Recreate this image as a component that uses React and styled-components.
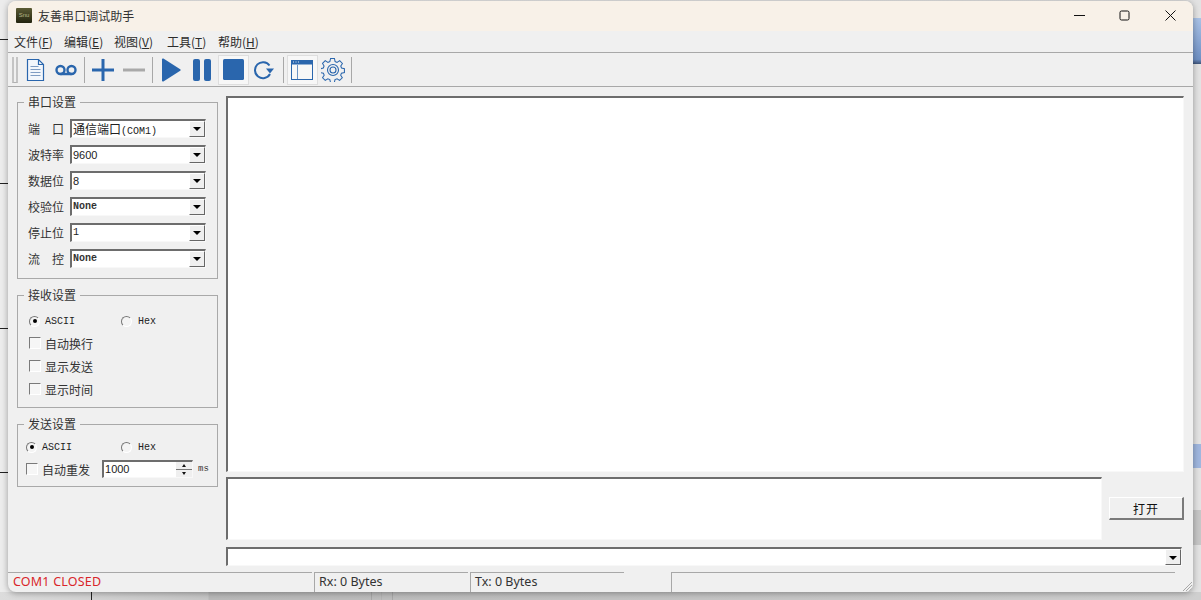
import React from "react";
import styled, { createGlobalStyle } from "styled-components";

const GlobalStyle = createGlobalStyle`
  html, body {
    margin: 0;
    padding: 0;
    background: #e6e6e6;
  }
`;

const CJK = `"Noto Sans CJK SC", "Noto Sans", sans-serif`;
const MONO = `"Liberation Mono", "Noto Sans CJK SC", monospace`;

const Desktop = styled.div`
  position: relative;
  width: 1201px;
  height: 600px;
  overflow: hidden;
  box-sizing: border-box;
  padding: 1px 0 0 8px;
  background: linear-gradient(to right, #ececec 0, #e2e2e2 100%);
  font-family: ${CJK};
  color: #222;
`;

const DesktopLine = styled.div`
  position: absolute;
  left: 0;
  top: ${(p) => p.$top}px;
  width: 8px;
  height: 1px;
  background: #222;
`;

const DesktopBottom = styled.div`
  position: absolute;
  left: 0;
  right: 0;
  bottom: 0;
  height: 8px;
  background: linear-gradient(to right, #dcdcdc 0, #c6c6c6 208px, #b9b9b9 209px, #c4c4c4 700px, #cfcfcf 100%);
`;

const DesktopTick = styled.div`
  position: absolute;
  left: ${(p) => p.$left}px;
  bottom: 0;
  width: 1px;
  height: 8px;
  background: ${(p) => p.$color};
`;

const DesktopPatch = styled.div`
  position: absolute;
  left: 1193px;
  width: 8px;
  top: ${(p) => p.$top}px;
  height: ${(p) => p.$height}px;
  background: ${(p) => p.$bg};
`;

const Window = styled.div`
  position: relative;
  z-index: 1;
  width: 1185px;
  height: 591px;
  display: flex;
  flex-direction: column;
  background: #f0f0f0;
  border-radius: 8px;
  overflow: hidden;
  box-shadow: 0 1px 6px rgba(0, 0, 0, 0.35);
`;

const TitleBar = styled.div`
  height: 30px;
  flex: none;
  box-sizing: border-box;
  display: flex;
  align-items: center;
  padding: 0 0 2px 8px;
  background: #f8f1e8;
`;

const AppIcon = styled.div`
  width: 16px;
  height: 15px;
  display: flex;
  align-items: center;
  justify-content: center;
  background: linear-gradient(#5a5a34, #23240f);
  color: #b9b98a;
  font: 6px "Liberation Sans", sans-serif;
  border-radius: 1px;
`;

const TitleText = styled.div`
  margin-left: 6px;
  font-size: 12px;
  letter-spacing: 0.05px;
  color: #333;
`;

const WindowControls = styled.div`
  margin-left: auto;
  display: flex;
  height: 100%;
`;

const WindowControl = styled.div`
  width: 45px;
  display: flex;
  align-items: center;
  justify-content: center;

  &:nth-child(2) {
    margin-right: 1px;
  }
`;

const MenuBar = styled.div`
  height: 21px;
  flex: none;
  display: flex;
  align-items: center;
  padding-left: 6px;
  font-size: 12px;
  color: #2c2c2c;
  border-bottom: 1px solid #a8a8a8;
`;

const MenuItem = styled.span`
  width: ${(p) => p.$width}px;
  white-space: nowrap;
`;

const Toolbar = styled.div`
  height: 33px;
  flex: none;
  display: flex;
  align-items: center;
  padding-left: 4px;
  border-bottom: 1px solid #a8a8a8;
`;

const Grip = styled.div`
  width: 6px;
  height: 26px;
  margin-right: 1.5px;
  box-sizing: border-box;
  border-left: 2px solid #c4c4c4;
  border-right: 2px solid #c4c4c4;
  border-bottom: 1px solid #b0b0b0;
`;

const ToolSep = styled.div`
  width: ${(p) => p.$width || 6}px;
  height: 26px;
  flex: none;
  display: flex;
  justify-content: center;

  &::before {
    content: "";
    width: 1px;
    background: #a8a8a8;
  }
`;

const ToolButton = styled.div`
  width: 31px;
  height: 30px;
  flex: none;
  box-sizing: border-box;
  display: flex;
  align-items: center;
  justify-content: center;
  background: ${(p) => (p.$pressed ? "#f7f7f7" : "transparent")};
  border: 1px solid ${(p) => (p.$pressed ? "#dedede" : "transparent")};
`;

const Body = styled.div`
  flex: 1;
  min-height: 0;
  display: flex;
  gap: 8px;
  padding: 9px 9px 0 9px;
`;

const Side = styled.div`
  width: 201px;
  flex: none;
  display: flex;
  flex-direction: column;
  gap: 16px;
  padding-top: 6px;
`;

const Group = styled.fieldset`
  margin: 0;
  height: ${(p) => p.$height}px;
  box-sizing: border-box;
  padding: 0;
  border: 1px solid #a9a9a9;
  position: relative;
`;

const GroupTitle = styled.div`
  position: absolute;
  left: 6px;
  top: -9px;
  padding: 0 4px;
  background: #f0f0f0;
  font-size: 12px;
  line-height: 15px;
  color: #333;
`;

const FieldList = styled.div`
  display: flex;
  flex-direction: column;
  gap: 6px;
  padding: 15px 11px 0 10px;
`;

const Field = styled.div`
  display: flex;
  align-items: center;
  height: 20px;
`;

const FieldLabel = styled.div`
  width: 36px;
  margin-right: 6px;
  flex: none;
  font-size: 12px;
  color: #333;
  display: flex;
  justify-content: space-between;
`;

const Combo = styled.div`
  flex: ${(p) => (p.$wide ? "none" : "1")};
  width: ${(p) => (p.$wide ? "956px" : "auto")};
  height: 19px;
  box-sizing: border-box;
  display: flex;
  align-items: center;
  background: #fff;
  border-top: 2px solid #6d6d6d;
  border-left: 2px solid #6d6d6d;
  border-right: 1px solid #f8f8f8;
  border-bottom: 1px solid #f8f8f8;
`;

const ComboText = styled.div`
  flex: 1;
  padding-left: 1px;
  font-family: ${(p) => (p.$digits ? `"Liberation Sans", sans-serif` : MONO)};
  font-size: ${(p) => (p.$digits ? "11px" : "10px")};
  font-weight: ${(p) => (p.$bold ? 700 : 400)};
  color: ${(p) => (p.$bold ? "#333" : "#222")};
  white-space: nowrap;
`;

const ComboCjk = styled.span`
  font-family: ${CJK};
  font-size: 12px;
  font-weight: 400;
`;

const ComboArrow = styled.div`
  width: 16px;
  height: 16px;
  flex: none;
  box-sizing: border-box;
  display: flex;
  align-items: center;
  justify-content: center;
  background: #efefef;
  border-right: 1px solid #666;
  border-bottom: 1px solid #666;
  border-left: 1px solid #fff;
  border-top: 1px solid #fff;

  &::after {
    content: "";
    width: 0;
    height: 0;
    margin-top: 1px;
    border-left: 4px solid transparent;
    border-right: 4px solid transparent;
    border-top: 4px solid #000;
  }
`;

const RadioRow = styled.div`
  display: flex;
  align-items: center;
  height: 14px;
  padding-left: ${(p) => p.$left}px;
  margin-top: ${(p) => p.$top || 0}px;
`;

const Radio = styled.span`
  width: 11px;
  height: 11px;
  flex: none;
  box-sizing: border-box;
  border-radius: 50%;
  background: #f4f4f4;
  border: 1px solid #fff;
  border-top-color: #777;
  border-left-color: #777;
  display: flex;
  align-items: center;
  justify-content: center;

  &::after {
    content: "";
    width: 4px;
    height: 4px;
    border-radius: 50%;
    background: ${(p) => (p.$on ? "#000" : "transparent")};
  }
`;

const OptText = styled.span`
  width: ${(p) => p.$width || 0}px;
  margin-left: ${(p) => p.$gap}px;
  font-family: ${MONO};
  font-size: 10px;
  color: #222;
`;

const CheckRow = styled.div`
  display: flex;
  align-items: center;
  height: 16px;
  padding-left: ${(p) => p.$left}px;
  margin-top: ${(p) => p.$top}px;
`;

const Check = styled.span`
  width: 12px;
  height: 12px;
  flex: none;
  box-sizing: border-box;
  background: #f6f6f6;
  border: 1px solid #fff;
  border-top-color: #7a7a7a;
  border-left-color: #7a7a7a;
`;

const CheckText = styled.span`
  margin-left: ${(p) => p.$gap}px;
  font-size: 12px;
  color: #333;
`;

const SpinBox = styled.div`
  width: 91px;
  height: 18px;
  margin-left: 12px;
  box-sizing: border-box;
  display: flex;
  background: #fff;
  border-top: 2px solid #6d6d6d;
  border-left: 2px solid #6d6d6d;
  border-right: 1px solid #f8f8f8;
  border-bottom: 1px solid #f8f8f8;
  font-family: "Liberation Sans", sans-serif;
  font-size: 11px;
  line-height: 15px;
  padding-left: 1px;
`;

const SpinValue = styled.div`
  flex: 1;
`;

const SpinArrows = styled.div`
  width: 16px;
  flex: none;
  display: flex;
  flex-direction: column;
  gap: 1px;
  background: #777;
`;

const SpinArrow = styled.div`
  flex: 1;
  background: #efefef;
  display: flex;
  align-items: center;
  justify-content: center;

  &::after {
    content: "";
    border-left: 2.5px solid transparent;
    border-right: 2.5px solid transparent;
    border-${(p) => (p.$up ? "bottom" : "top")}: 3px solid #111;
  }
`;

const Unit = styled.span`
  margin-left: 5px;
  font-family: ${MONO};
  font-size: 9px;
  color: #333;
`;

const Main = styled.div`
  flex: 1;
  min-width: 0;
  display: flex;
  flex-direction: column;
`;

const SunkenBox = styled.div`
  box-sizing: border-box;
  background: #fff;
  border-top: 2px solid #6d6d6d;
  border-left: 2px solid #6d6d6d;
  border-right: 1px solid #f8f8f8;
  border-bottom: 1px solid #f8f8f8;
`;

const ReceiveBox = styled(SunkenBox)`
  height: 376px;
  width: 958px;
`;

const SendRow = styled.div`
  display: flex;
  align-items: center;
  gap: 7px;
  margin-top: 5px;
`;

const SendBox = styled(SunkenBox)`
  width: 876px;
  height: 63px;
`;

const OpenButton = styled.div`
  width: 75px;
  height: 23px;
  box-sizing: border-box;
  display: flex;
  align-items: center;
  justify-content: center;
  background: #f0f0f0;
  font-size: 12px;
  letter-spacing: 1px;
  color: #111;
  border-top: 1px solid #fff;
  border-left: 1px solid #fff;
  border-right: 2px solid #7a7a7a;
  border-bottom: 2px solid #7a7a7a;
`;

const BottomCombo = styled.div`
  margin-top: 7px;
`;

const StatusBar = styled.div`
  height: 20px;
  flex: none;
  margin-top: auto;
  display: flex;
  position: relative;
  font-family: "Noto Sans", sans-serif;
  font-size: 12.5px;
`;

const StatusCell = styled.div`
  width: ${(p) => p.$width}px;
  margin-left: ${(p) => p.$gap || 0}px;
  box-sizing: border-box;
  padding-left: ${(p) => p.$pad}px;
  line-height: 18px;
  border-top: 1px solid #a8a8a8;
  border-left: ${(p) => (p.$flush ? "none" : "1px solid #a8a8a8")};
  color: ${(p) => p.$color || "#333"};
  letter-spacing: ${(p) => p.$spacing || 0}px;
  white-space: nowrap;
`;

const SizeGrip = styled.svg`
  position: absolute;
  right: 0;
  bottom: 0;
`;

const BLUE = "#2a66ad";

const IconDoc = () => (
  <svg width="19" height="24" viewBox="0 0 19 24" fill="none" stroke={BLUE}>
    <path d="M1.5 1.5h11l5 5v16h-16z" fill="#f2f6fb" strokeWidth="1.2" />
    <path d="M12.5 1.5v5h5" strokeWidth="1.2" />
    <path d="M4.5 8.5h8M4.5 11.5h10M4.5 14.5h10M4.5 17.5h10" stroke="#7f9cc2" strokeWidth="1.2" />
  </svg>
);

const IconTape = () => (
  <svg width="22" height="12" viewBox="0 0 22 12" fill="none" stroke={BLUE} strokeWidth="2.4">
    <circle cx="5.5" cy="6" r="4" />
    <circle cx="16.5" cy="6" r="4" />
    <path d="M5.5 10h11" />
  </svg>
);

const IconPlus = () => (
  <svg width="22" height="22" viewBox="0 0 22 22" stroke={BLUE} strokeWidth="3" fill="none">
    <path d="M11 0v22M0 11h22" />
  </svg>
);

const IconMinus = () => (
  <svg width="22" height="22" viewBox="0 0 22 22" stroke="#a9a9a9" strokeWidth="3" fill="none">
    <path d="M0 11h22" />
  </svg>
);

const IconPlay = () => (
  <svg width="20" height="24" viewBox="0 0 20 24" fill={BLUE}>
    <path d="M1 1.5c0-1 1-1.3 1.8-.8l16.4 10.500c.6.4.6 1.200 0 1.600L2.800 23.300c-.8.500-1.800.2-1.800-.8z" />
  </svg>
);

const IconPause = () => (
  <svg width="18" height="22" viewBox="0 0 18 22" fill={BLUE}>
    <rect x="0" y="0" width="7" height="22" rx="2" />
    <rect x="11" y="0" width="7" height="22" rx="2" />
  </svg>
);

const IconStop = () => (
  <svg width="21" height="21" viewBox="0 0 21 21" fill={BLUE}>
    <rect width="21" height="21" rx="1.5" />
  </svg>
);

const IconRefresh = () => (
  <svg width="22" height="20" viewBox="0 0 22 20" fill="none">
    <path d="M16.500 5.500A8 8 0 1 0 17 14" stroke={BLUE} strokeWidth="2" />
    <path d="M21 8.500h-8l4 5z" fill={BLUE} />
  </svg>
);

const IconView = () => (
  <svg width="22" height="20" viewBox="0 0 22 20" fill="none">
    <rect x="0.500" y="0.500" width="21" height="19" stroke={BLUE} />
    <rect x="0" y="0" width="22" height="4.500" fill={BLUE} />
    <path d="M2 2h1M4.500 2h1M7 2h1" stroke="#dfe8f3" />
    <path d="M6.500 5v14" stroke="#6b93c4" />
  </svg>
);

const IconGear = () => (
  <svg width="24" height="24" viewBox="0 0 24 24" fill="none" stroke={BLUE} strokeWidth="1.100">
    <path d="M10 1h4l.7 3.200 2 .9 2.800-1.800 2.800 2.900-1.700 2.700.8 2.100 3 .7v4l-3.100.7-.8 2 1.700 2.700-2.800 2.800-2.700-1.700-2.100.8-.7 3h-4l-.7-3-2.100-.8-2.700 1.700-2.800-2.800 1.700-2.700-.8-2-3.100-.7v-4l3-.7.8-2.100L1.600 6.200l2.800-2.900 2.800 1.800 2-.9z" transform="translate(0 -.5) scale(.96)" />
    <circle cx="12" cy="12" r="5.500" />
    <circle cx="12" cy="12" r="3" />
  </svg>
);

const fields = [
  { label: ["端", "口"], value: "通信端口", suffix: "(COM1)" },
  { label: ["波特率"], value: "9600", digits: true },
  { label: ["数据位"], value: "8", digits: true },
  { label: ["校验位"], value: "None", bold: true },
  { label: ["停止位"], value: "1" },
  { label: ["流", "控"], value: "None", bold: true },
];

const menus = [
  { name: "文件", key: "F", width: 50 },
  { name: "编辑", key: "E", width: 50 },
  { name: "视图", key: "V", width: 53 },
  { name: "工具", key: "T", width: 51 },
  { name: "帮助", key: "H", width: 50 },
];

export default function App() {
  return (
    <Desktop>
      <GlobalStyle />
      {[39, 183, 328, 472].map((y) => (
        <DesktopLine key={y} $top={y} />
      ))}
      <DesktopBottom />
      <DesktopTick $left={91} $color="#222" />
      <DesktopTick $left={371} $color="#a8a8a8" />
      <DesktopTick $left={381} $color="#b4b4b4" />
      <DesktopTick $left={392} $color="#a8a8a8" />
      <DesktopPatch $top={18} $height={46} $bg="linear-gradient(#a9c2e6, #6f90c4 90%, #3d5378)" />
      <DesktopPatch $top={444} $height={24} $bg="#9fb6de" />
      <DesktopPatch $top={510} $height={35} $bg="#c6c6c6" />

      <Window>
        <TitleBar>
          <AppIcon>Snu</AppIcon>
          <TitleText>友善串口调试助手</TitleText>
          <WindowControls>
            <WindowControl>
              <svg width="11" height="11" viewBox="0 0 11 11" stroke="#111" fill="none">
                <path d="M0 5.500h11" />
              </svg>
            </WindowControl>
            <WindowControl>
              <svg width="11" height="11" viewBox="0 0 11 11" stroke="#111" fill="none">
                <rect x="1" y="1" width="9" height="9" rx="1.500" />
              </svg>
            </WindowControl>
            <WindowControl>
              <svg width="11" height="11" viewBox="0 0 11 11" stroke="#111" fill="none">
                <path d="M.5.500l10 10M10.500.500l-10 10" />
              </svg>
            </WindowControl>
          </WindowControls>
        </TitleBar>

        <MenuBar>
          {menus.map((m) => (
            <MenuItem key={m.key} $width={m.width}>
              {m.name}(<u>{m.key}</u>)
            </MenuItem>
          ))}
        </MenuBar>

        <Toolbar>
          <Grip />
          <ToolButton><IconDoc /></ToolButton>
          <ToolButton><IconTape /></ToolButton>
          <ToolSep />
          <ToolButton><IconPlus /></ToolButton>
          <ToolButton><IconMinus /></ToolButton>
          <ToolSep />
          <ToolButton><IconPlay /></ToolButton>
          <ToolButton><IconPause /></ToolButton>
          <ToolButton $pressed><IconStop /></ToolButton>
          <ToolButton><IconRefresh /></ToolButton>
          <ToolSep $width={7} />
          <ToolButton $pressed><IconView /></ToolButton>
          <ToolButton><IconGear /></ToolButton>
          <ToolSep />
        </Toolbar>

        <Body>
          <Side>
            <Group $height={177}>
              <GroupTitle>串口设置</GroupTitle>
              <FieldList>
                {fields.map((f) => (
                  <Field key={f.label.join("")}>
                    <FieldLabel>
                      {f.label.map((c) => (
                        <span key={c}>{c}</span>
                      ))}
                    </FieldLabel>
                    <Combo>
                      <ComboText $bold={f.bold} $digits={f.digits}>
                        {f.suffix ? <ComboCjk>{f.value}</ComboCjk> : f.value}
                        {f.suffix}
                      </ComboText>
                      <ComboArrow />
                    </Combo>
                  </Field>
                ))}
              </FieldList>
            </Group>

            <Group $height={113}>
              <GroupTitle>接收设置</GroupTitle>
              <RadioRow $left={11} $top={18}>
                <Radio $on />
                <OptText $gap={5} $width={76}>ASCII</OptText>
                <Radio />
                <OptText $gap={6}>Hex</OptText>
              </RadioRow>
              <CheckRow $left={11} $top={7}>
                <Check />
                <CheckText $gap={4}>自动换行</CheckText>
              </CheckRow>
              <CheckRow $left={11} $top={7}>
                <Check />
                <CheckText $gap={4}>显示发送</CheckText>
              </CheckRow>
              <CheckRow $left={11} $top={7}>
                <Check />
                <CheckText $gap={4}>显示时间</CheckText>
              </CheckRow>
            </Group>

            <Group $height={63}>
              <GroupTitle>发送设置</GroupTitle>
              <RadioRow $left={8} $top={15}>
                <Radio $on />
                <OptText $gap={5} $width={79}>ASCII</OptText>
                <Radio />
                <OptText $gap={6}>Hex</OptText>
              </RadioRow>
              <CheckRow $left={8} $top={7}>
                <Check />
                <CheckText $gap={4}>自动重发</CheckText>
                <SpinBox>
                  <SpinValue>1000</SpinValue>
                  <SpinArrows>
                    <SpinArrow $up />
                    <SpinArrow />
                  </SpinArrows>
                </SpinBox>
                <Unit>ms</Unit>
              </CheckRow>
            </Group>
          </Side>

          <Main>
            <ReceiveBox />
            <SendRow>
              <SendBox />
              <OpenButton>打开</OpenButton>
            </SendRow>
            <BottomCombo>
              <Combo $wide>
                <ComboText />
                <ComboArrow />
              </Combo>
            </BottomCombo>
          </Main>
        </Body>

        <StatusBar>
          <StatusCell $width={304} $pad={5} $flush $color="#d9262a" $spacing={0.2}>COM1 CLOSED</StatusCell>
          <StatusCell $width={154} $gap={2} $pad={4}>Rx: 0 Bytes</StatusCell>
          <StatusCell $width={154} $gap={2} $pad={4}>Tx: 0 Bytes</StatusCell>
          <StatusCell $width={504} $gap={47} $pad={4} />
          <SizeGrip width="14" height="14" viewBox="0 0 14 14" stroke="#a8a8a8" fill="none">
            <path d="M13 4l-9 9M13 7l-6 6M13 10l-3 3" />
          </SizeGrip>
        </StatusBar>
      </Window>
    </Desktop>
  );
}
